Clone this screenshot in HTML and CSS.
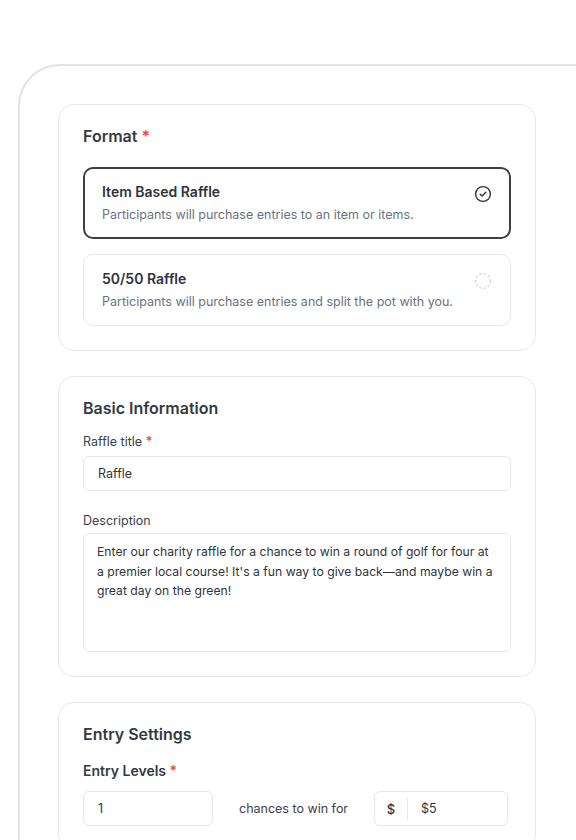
FILE: index.html
```html
<!DOCTYPE html>
<html>
<head>
<meta charset="utf-8">
<link rel="stylesheet" href="styles.css">
</head>
<body>
<div class="frame">
  <div class="stack">
    <section class="card">
      <h2 class="card-title">Format <span class="req">*</span></h2>
      <div class="options">
        <div class="option selected">
          <div class="opt-text">
            <div class="opt-title">Item Based Raffle</div>
            <div class="opt-desc">Participants will purchase entries to an item or items.</div>
          </div>
          <svg class="opt-icon" width="18" height="18" viewBox="0 0 18 18"><circle cx="9" cy="9" r="7.4" fill="none" stroke="#2f343d" stroke-width="1.4"/><path d="M6.2 9.2l1.9 1.8 3.7-3.8" fill="none" stroke="#2f343d" stroke-width="1.4" stroke-linecap="round" stroke-linejoin="round"/></svg>
        </div>
        <div class="option">
          <div class="opt-text">
            <div class="opt-title">50/50 Raffle</div>
            <div class="opt-desc">Participants will purchase entries and split the pot with you.</div>
          </div>
          <svg class="opt-icon" width="18" height="18" viewBox="0 0 18 18"><circle cx="9" cy="9" r="7.4" fill="none" stroke="#d1d5db" stroke-width="1.4" stroke-dasharray="2.2 2.2"/></svg>
        </div>
      </div>
    </section>

    <section class="card">
      <h2 class="card-title">Basic Information</h2>
      <div class="field">
        <label class="label">Raffle title <span class="req">*</span></label>
        <div class="input">Raffle</div>
      </div>
      <div class="field gap-top">
        <label class="label">Description</label>
        <div class="input textarea">Enter our charity raffle for a chance to win a round of golf for four at a premier local course! It's a fun way to give back—and maybe win a great day on the green!</div>
      </div>
    </section>

    <section class="card">
      <h2 class="card-title">Entry Settings</h2>
      <div class="sub-title">Entry Levels <span class="req">*</span></div>
      <div class="level-row">
        <div class="input small">1</div>
        <div class="between">chances to win for</div>
        <div class="input price"><span class="prefix">$</span><span class="price-val">$5</span></div>
      </div>
    </section>
  </div>
</div>
</body>
</html>
```
FILE: styles.css
```css
* { box-sizing: border-box; }
html, body { margin: 0; padding: 0; background: #fff; }
body {
  font-family: Inter, "Noto Sans", sans-serif;
  color: #2f343d;
  width: 576px;
  height: 840px;
  overflow: hidden;
}
.frame {
  margin: 64px 0 0 18px;
  width: 640px;
  height: 900px;
  border: 2px solid #e3e3e3;
  border-radius: 42px;
  padding: 38px 0 0 38px;
}
.stack {
  width: 478px;
  display: flex;
  flex-direction: column;
  gap: 25px;
}
.card {
  border: 1px solid #e5e7eb;
  border-radius: 16px;
  padding: 21px 24px 24px 24px;
}
.card-title {
  margin: 0;
  font-size: 16px;
  font-weight: 600;
  line-height: 20px;
  color: #343944;
}
.req { color: #ef4444; font-weight: 600; }
.options {
  margin-top: 21px;
  display: flex;
  flex-direction: column;
  gap: 15px;
}
.option {
  height: 72px;
  border: 1px solid #e5e7eb;
  border-radius: 10px;
  display: flex;
  align-items: flex-start;
  justify-content: space-between;
  padding: 15px 18px 0 18px;
}
.option.selected {
  border: 2px solid #3a3f49;
  padding: 14px 17px 0 17px;
}
.opt-title {
  font-size: 14px;
  font-weight: 600;
  line-height: 18px;
  color: #2f343d;
}
.opt-desc {
  margin-top: 6px;
  font-size: 12.5px;
  line-height: 16px;
  color: #6b7280;
}
.opt-icon { margin-top: 2px; }
.field { margin-top: 16px; display: flex; flex-direction: column; }
.field.gap-top { margin-top: 22px; }
.label {
  font-size: 12.5px;
  line-height: 16px;
  color: #3b404a;
  margin-bottom: 6px;
}
.input {
  border: 1px solid #e5e7eb;
  border-radius: 6px;
  height: 35px;
  padding: 0 14px;
  display: flex;
  align-items: center;
  font-size: 12.5px;
  color: #2f343d;
}
.textarea {
  display: block;
  height: 119px;
  padding: 8px 13px;
  font-size: 12.2px;
  line-height: 19.5px;
  margin-top: -2px;
}
.sub-title {
  margin-top: 18px;
  font-size: 14px;
  font-weight: 600;
  line-height: 18px;
  color: #343944;
}
.level-row {
  margin-top: 11px;
  display: flex;
  align-items: center;
}
.input.small { width: 130px; }
.between {
  font-size: 12.5px;
  color: #3b404a;
  margin-left: 26px;
  width: 135px;
}
.input.price {
  width: 134px;
  padding: 0;
}
.prefix {
  width: 33px;
  height: 22px;
  border-right: 1px solid #e5e7eb;
  display: flex;
  align-items: center;
  justify-content: center;
  font-weight: 500;
  font-size: 13px;
}
.price-val { margin-left: 13px; }
```
